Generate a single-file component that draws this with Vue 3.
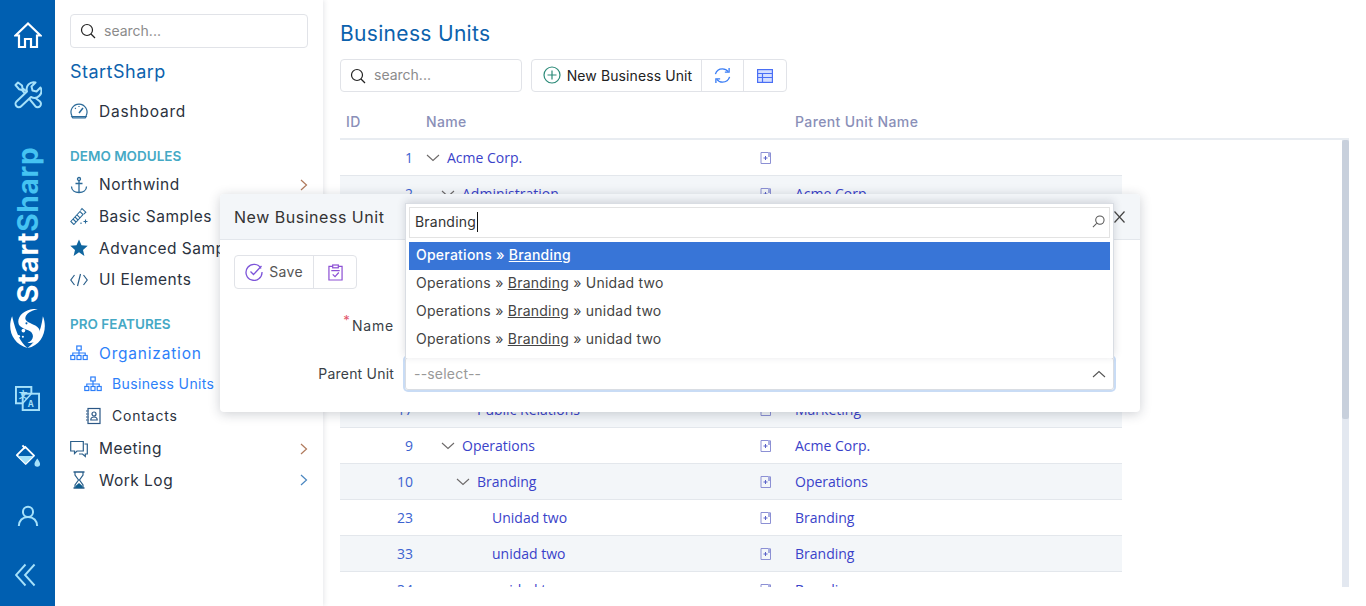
<template>
  <div class="page">
    <aside class="rail">
      <svg class="rail-icon home" viewBox="0 0 28 28" fill="none" stroke="#fff" stroke-width="2.2" stroke-linejoin="miter">
        <path d="M1.500 14.500 14 2.500l12.500 12H23V26h-6v-8h-6v8H5V14.500z" />
      </svg>
      <svg class="rail-icon tools" viewBox="0 0 28 28" fill="none" stroke="#a5e1fa" stroke-width="2" stroke-linejoin="round">
        <path d="M1.500 4 4 1.500l4 3 .5 2.800L26 20.500a3.300 3.300 0 0 1-4.700 4.700L8 9l-3-.8z" />
        <path d="M26.500 6.500 22.500 10.500 18.500 9.500 17.500 5.500 21.500 1.500a7 7 0 0 0-8.500 9L2.500 20.500a3.300 3.300 0 0 0 4.700 4.700L17 16a7 7 0 0 0 9.500-9.500z" fill="#005fb1" />
      </svg>
      <div class="rail-brand"><span class="brand-a">Start</span><span class="brand-b">Sharp</span></div>
      <svg class="rail-logo" viewBox="0 0 36 38" fill="#fff">
        <path d="M3 7C-2 19 3 34 18 38 11 32 7 24 3 7z" />
        <path d="M33 7c5 12 0 28-15 31 8-6 13-15 15-31z" />
        <path d="M28 0C18-1 9 5 9 12.500c0 7 10 7 13 10.500 3 4 .5 8.500-4 10 8 1.500 13-5 12-11.500-1-7-12-6.500-14-11.500C15 5.500 21 1.500 28 0z" />
        <g fill="#005fb1"><circle cx="19" cy="10" r="1.200" /><circle cx="22" cy="13" r="1" /><circle cx="17" cy="14" r="1" /></g>
        <circle cx="14" cy="21" r="1.800" /><circle cx="9.500" cy="26.500" r="1.200" /><circle cx="13.500" cy="27" r="1" />
      </svg>
      <svg class="rail-icon translate" viewBox="0 0 26 26" fill="none" stroke="#a5e1fa" stroke-width="2">
        <rect x="1" y="1" width="16" height="17" fill="#005fb1" />
        <rect x="8" y="8" width="17" height="17" fill="#005fb1" />
        <path d="M17 8 8 18" stroke-width="1.500" />
        <text x="4" y="12" class="glyph">文</text>
        <text x="13.500" y="22" class="glyph">A</text>
      </svg>
      <svg class="rail-icon bucket" viewBox="0 0 28 28" fill="none" stroke="#fff" stroke-width="2" stroke-linejoin="round">
        <path d="M2 12 11 3l9.500 9.500-9 9z" />
        <path d="M3 13h16.500l-8 8z" fill="#a5e1fa" stroke="none" />
        <path d="M8 1.500 11 5" />
        <path d="M24 15.500c-2 3-3 4.500-3 6a3 3 0 0 0 6 0c0-1.500-1-3-3-6z" fill="#a5e1fa" stroke="none" />
      </svg>
      <svg class="rail-icon user" viewBox="0 0 24 24" fill="none" stroke="#a5e1fa" stroke-width="2.200">
        <circle cx="12" cy="7.500" r="5.500" />
        <path d="M2 23c0-6 4-10 10-10s10 4 10 10" />
      </svg>
      <svg class="rail-icon collapse" viewBox="0 0 22 24" fill="none" stroke="#a5e1fa" stroke-width="2">
        <path d="M11 1 1 12l10 11" /><path d="M20.500 1 10.500 12l10 11" />
      </svg>
    </aside>

    <nav class="side">
      <div class="search side-search">
        <svg class="search-ico" viewBox="0 0 16 16" fill="none" stroke="#222" stroke-width="1.200"><circle cx="7" cy="7" r="5.500" /><path d="m11 11 4 4" /></svg>
        <span>search...</span>
      </div>
      <div class="side-brand">StartSharp</div>
      <div class="nav-row dash">
        <svg class="nav-ico" viewBox="0 0 18 18" fill="none" stroke="#2b6a99" stroke-width="1.200">
          <path d="M2 14a8 8 0 1 1 14 0" /><path d="M1.800 14.500h14.400l-1 1.500H2.800z" fill="#8eb4cf" /><path d="m9 11 4-5" stroke-width="1.500" /><path d="M5 6l.8.8M9 4v1" />
        </svg>
        <span class="wide">Dashboard</span>
      </div>

      <div class="section demo">DEMO MODULES</div>
      <div class="nav-row">
        <svg class="nav-ico" viewBox="0 0 18 18" fill="none" stroke="#2b6a99" stroke-width="1.300">
          <circle cx="9" cy="3" r="1.500" /><path d="M9 4.500V16.500M5.500 7.500h7M1.500 10.500c0 4 3.500 6 7.500 6s7.500-2 7.500-6" />
        </svg>
        <span>Northwind</span>
        <svg class="chev" viewBox="0 0 8 12" fill="none" stroke="#b07a5c" stroke-width="1.200"><path d="m1 1 5.500 5L1 11" /></svg>
      </div>
      <div class="nav-row">
        <svg class="nav-ico" viewBox="0 0 18 18" fill="none" stroke="#2b6a99" stroke-width="1.100">
          <path d="m.8 14.500 9.200-10 3 3-9.200 10z" /><path d="m3 12 3 3M5 10l3 3M7 7.800l3 3" /><path d="M10.500 3.500 12 1.500l3.800 3.700-2 2" /><path d="M15.500 12.500v4M13.500 14.500h4M11 15.500v1.500" />
        </svg>
        <span>Basic Samples</span>
      </div>
      <div class="nav-row">
        <svg class="nav-ico" viewBox="0 0 18 18" fill="#0f659f"><path d="m9 .5 2.500 5.800 6.200.5-4.700 4.100 1.400 6.100L9 13.300l-5.400 3.700L5 10.900.3 6.800l6.200-.5z" /></svg>
        <span>Advanced Samples</span>
      </div>
      <div class="nav-row">
        <svg class="nav-ico" viewBox="0 0 18 18" fill="none" stroke="#2b5f8a" stroke-width="1.200"><path d="M4.500 4 .8 9l3.700 5M13.500 4l3.700 5-3.700 5M10.500 3 7.500 15" /></svg>
        <span>UI Elements</span>
      </div>

      <div class="section pro">PRO FEATURES</div>
      <div class="nav-row active">
        <svg class="nav-ico" viewBox="0 0 18 18" fill="none" stroke="#2d7ff9" stroke-width="1.200">
          <rect x="6.800" y="2" width="4.400" height="4" /><rect x=".8" y="11.500" width="4" height="4" /><rect x="7" y="11.500" width="4" height="4" /><rect x="13.200" y="11.500" width="4" height="4" /><path d="M9 6v5.500M2.800 11.500V9h12.400v2.500" />
        </svg>
        <span class="wide">Organization</span>
      </div>
      <div class="nav-row sub active">
        <svg class="nav-ico" viewBox="0 0 18 18" fill="none" stroke="#2d7ff9" stroke-width="1.200">
          <rect x="6.800" y="2" width="4.400" height="4" /><rect x=".8" y="11.500" width="4" height="4" /><rect x="7" y="11.500" width="4" height="4" /><rect x="13.200" y="11.500" width="4" height="4" /><path d="M9 6v5.500M2.800 11.500V9h12.400v2.500" />
        </svg>
        <span>Business Units</span>
      </div>
      <div class="nav-row sub contacts">
        <svg class="nav-ico" viewBox="0 0 18 18" fill="none" stroke="#2b5785" stroke-width="1.200">
          <rect x="4" y="1.500" width="12" height="15" /><circle cx="10" cy="7" r="2" /><path d="M6.800 13c0-2 1.400-3 3.200-3s3.200 1 3.200 3z" /><path d="M2 4h3M2 7h3M2 10h3M2 13h3" stroke-dasharray="1.500 1" />
        </svg>
        <span class="wide">Contacts</span>
      </div>
      <div class="nav-row meeting">
        <svg class="nav-ico" viewBox="0 0 18 18" fill="none" stroke="#2b5f8a" stroke-width="1.200">
          <path d="M.7 1.500h12.600v9.500H7l-2.500 2.500V11H.7z" /><path d="M14.500 4h2.800v10h-2v2.500L12.500 14H9" />
        </svg>
        <span>Meeting</span>
        <svg class="chev" viewBox="0 0 8 12" fill="none" stroke="#b07a5c" stroke-width="1.200"><path d="m1 1 5.500 5L1 11" /></svg>
      </div>
      <div class="nav-row">
        <svg class="nav-ico" viewBox="0 0 18 18" fill="none" stroke="#2b5f8a" stroke-width="1.200">
          <path d="M3.500 1h11M3.500 17h11" stroke-width="1.600" /><path d="M5 1v3l3.500 5L5 14v3M13 1v3L9.500 9l3.500 5v3" /><path d="M5.500 17v-2l3.500-3 3.500 3v2z" fill="#0f5d8e" stroke="none" />
        </svg>
        <span>Work Log</span>
        <svg class="chev" viewBox="0 0 8 12" fill="none" stroke="#4a86c0" stroke-width="1.200"><path d="m1 1 5.500 5L1 11" /></svg>
      </div>
    </nav>

    <main class="content">
      <h1 class="title">Business Units</h1>
      <div class="toolbar">
        <div class="search grid-search">
          <svg class="search-ico" viewBox="0 0 16 16" fill="none" stroke="#222" stroke-width="1.200"><circle cx="7" cy="7" r="5.500" /><path d="m11 11 4 4" /></svg>
          <span>search...</span>
        </div>
        <div class="btn-group">
          <div class="btn add">
            <svg viewBox="0 0 18 18" width="18" height="18" fill="none" stroke="#2b8a78" stroke-width="1.200"><circle cx="9" cy="9" r="8" /><path d="M9 4.500v9M4.500 9h9" /></svg>
            <span>New Business Unit</span>
          </div>
          <div class="btn icon-btn">
            <svg viewBox="0 0 18 18" width="17" height="17" fill="none" stroke="#3a7df5" stroke-width="1.400">
              <path d="M1.500 7.500C2.500 4 5.500 2 9 2c2.500 0 4.500 1 6 3" /><path d="M16 1v4.500h-4.500" /><path d="M16.500 10.500C15.500 14 12.500 16 9 16c-2.500 0-4.500-1-6-3" /><path d="M2 17v-4.500h4.500" />
            </svg>
          </div>
          <div class="btn icon-btn">
            <svg viewBox="0 0 16 14" width="16" height="14" fill="#d6e0ff" stroke="#4a6ff5" stroke-width="1.200"><rect x=".6" y=".6" width="14.800" height="12.800" /><path d="M.6 4.500h14.800M.6 8.500h14.800M5.500 4.500v9" fill="none" /></svg>
          </div>
        </div>
      </div>

      <div class="grid-head">
        <div class="col-id head-id">ID</div>
        <div class="col-name head-name">Name</div>
        <div class="col-act"></div>
        <div class="col-parent">Parent Unit Name</div>
      </div>
      <div class="grid-view">
        <div class="rows">
          <div v-for="(row, i) in rows" :key="i" class="row">
            <template v-if="row.id">
              <div class="col-id num">{{ row.id }}</div>
              <div class="col-name link" :style="{ paddingLeft: 6 + row.level * 15 + 'px' }">
                <svg v-if="row.open" class="toggle" viewBox="0 0 14 8" fill="none" stroke="#6d6a6a" stroke-width="1.100"><path d="m1 1 6 5.500L13 1" /></svg>
                <span v-else class="toggle"></span>
                <span>{{ row.name }}</span>
              </div>
              <div class="col-act">
                <svg viewBox="0 0 12 14" width="12" height="14" fill="none" stroke="#5a62c8" stroke-width="1"><path d="M8 1.500H1v11h9.500V1.500" stroke="#8c90d4" /><path d="M9 1v5M5.500 5v4M3.500 7h4" /></svg>
              </div>
              <div class="col-parent link">{{ row.parent }}</div>
            </template>
          </div>
        </div>
        <div class="track"><div class="thumb"></div></div>
      </div>
    </main>

    <section class="modal">
      <header class="modal-head">
        <span>New Business Unit</span>
        <svg class="close" viewBox="0 0 11 12" fill="none" stroke="#444" stroke-width="1.200"><path d="m.5.5 10 11M10.500.5l-10 11" /></svg>
      </header>
      <div class="modal-body">
        <div class="btn-group save-group">
          <div class="btn save">
            <svg viewBox="0 0 18 18" width="18" height="18" fill="none" stroke="#7d55d9" stroke-width="1.300"><path d="M16 5.500A8 8 0 1 0 17 9" /><path d="m5.500 8.500 3 3L16.500 3" /></svg>
            <span>Save</span>
          </div>
          <div class="btn clip">
            <svg viewBox="0 0 16 18" width="15" height="17" fill="none" stroke="#8d50d4" stroke-width="1.300"><path d="M5 2.500H1V17h14V2.500h-4" /><rect x="5" y="1" width="6" height="3" /><path d="M3.500 7h9" /><path d="m5 11 2.500 2.500L11.500 9" /></svg>
          </div>
        </div>
        <div class="form">
          <label class="label"><sup class="req">*</sup><span class="wide">Name</span></label>
          <div class="field"></div>
          <label class="label">Parent Unit</label>
          <div class="field open">
            <span class="placeholder">--select--</span>
            <svg class="up" viewBox="0 0 14 8" fill="none" stroke="#555" stroke-width="1.100"><path d="m1 7 6-5.500L13 7" /></svg>
            <div class="drop">
              <div class="drop-search">
                <span>Branding</span><i class="caret"></i>
                <svg class="lens" viewBox="0 0 14 14" fill="none" stroke="#555" stroke-width="1.100"><circle cx="8.500" cy="5.500" r="4.500" /><path d="M5 9 1 13" /></svg>
              </div>
              <div v-for="(opt, i) in options" :key="i" class="opt" :class="{ hl: i === 0 }">Operations » <u>Branding</u>{{ opt }}</div>
            </div>
          </div>
        </div>
      </div>
    </section>
  </div>
</template>

<script setup>
// rows with no id sit completely behind the dialog, they only keep the striping
const rows = [
  { id: 1, name: 'Acme Corp.', level: 0, open: true, parent: '' },
  { id: 2, name: 'Administration', level: 1, open: true, parent: 'Acme Corp.' },
  {},
  {},
  {},
  {},
  {},
  { id: 17, name: 'Public Relations', level: 2, parent: 'Marketing' },
  { id: 9, name: 'Operations', level: 1, open: true, parent: 'Acme Corp.' },
  { id: 10, name: 'Branding', level: 2, open: true, parent: 'Operations' },
  { id: 23, name: 'Unidad two', level: 3, parent: 'Branding' },
  { id: 33, name: 'unidad two', level: 3, parent: 'Branding' },
  { id: 34, name: 'unidad two', level: 3, parent: 'Branding' }
]

const options = ['', ' » Unidad two', ' » unidad two', ' » unidad two']
</script>

<style>
body {
  margin: 0;
  background: #fff;
}
</style>

<style scoped>
.page {
  position: relative;
  display: flex;
  width: 1366px;
  height: 606px;
  overflow: hidden;
  background: #fff;
  font-family: Inter, "Liberation Sans", sans-serif;
  color: #2b3240;
}

/* left rail */
.rail {
  flex: none;
  display: flex;
  flex-direction: column;
  align-items: center;
  width: 55px;
  background: #005fb1;
}
.rail-icon {
  display: block;
  flex: none;
}
.home {
  width: 28px;
  height: 28px;
  margin-top: 21px;
}
.tools {
  width: 28px;
  height: 28px;
  margin-top: 32px;
}
.rail-brand {
  margin-top: 38px;
  height: 156px;
  writing-mode: vertical-rl;
  transform: rotate(180deg);
  font-size: 28px;
  font-weight: 700;
  line-height: 30px;
  letter-spacing: 0.8px;
  white-space: nowrap;
}
.brand-a {
  color: #fff;
}
.brand-b {
  color: #45c3f2;
}
.rail-logo {
  width: 37px;
  height: 39px;
  margin-top: 6px;
  flex: none;
}
.translate {
  width: 25px;
  height: 25px;
  margin-top: 38px;
}
.glyph {
  font-size: 9px;
  font-weight: 700;
  fill: #a5e1fa;
  stroke: none;
  font-family: "Noto Sans CJK SC", "Liberation Sans", sans-serif;
}
.bucket {
  width: 26px;
  height: 26px;
  margin-top: 33px;
}
.user {
  width: 22px;
  height: 24px;
  margin-top: 34px;
}
.collapse {
  width: 21px;
  height: 24px;
  margin-top: 35px;
  margin-right: 4px;
}

/* sidebar */
.side {
  flex: none;
  box-sizing: border-box;
  width: 268px;
  padding: 14px 15px 0;
  box-shadow: 1px 0 5px rgba(40, 50, 70, 0.12);
  font-size: 15.5px;
  letter-spacing: 0.48px;
}
.wide {
  letter-spacing: 0.8px;
}
.search {
  display: flex;
  align-items: center;
  box-sizing: border-box;
  padding-bottom: 2px;
  border: 1px solid #e1e3e8;
  border-radius: 4px;
  background: #fff;
  color: #8b8b8b;
  font-size: 14px;
  letter-spacing: 0;
}
.search-ico {
  width: 16px;
  height: 16px;
  flex: none;
  margin: 2px 8px 0 9px;
}
.side-search {
  height: 34px;
}
.grid-search {
  width: 182px;
  height: 33px;
}
.grid-search .search-ico {
  margin: 2px 8px 0 9px;
}
.side-brand {
  height: 24px;
  margin-top: 12px;
  color: #0c62ad;
  font-size: 18px;
  line-height: 24px;
}
.nav-row {
  display: flex;
  align-items: center;
  box-sizing: border-box;
  height: 31.6px;
  padding-top: 1px;
  white-space: nowrap;
}
.dash {
  margin-top: 11px;
}
.nav-ico {
  flex: none;
  width: 18px;
  height: 18px;
  margin-right: 11px;
}
.chev {
  width: 8px;
  height: 12px;
  margin-left: auto;
  margin-right: 0;
}
.section {
  height: 20px;
  font-size: 13.5px;
  font-weight: 600;
  line-height: 20px;
  letter-spacing: 0;
  color: #45a9c5;
}
.demo {
  margin-top: 19px;
  margin-bottom: 3px;
}
.pro {
  margin-top: 19px;
  margin-bottom: 3px;
}
.active {
  color: #2d7ff9;
}
.sub {
  height: 31px;
  margin-top: -1px;
  padding-left: 14px;
  font-size: 14px;
  letter-spacing: 0.36px;
}
.sub .nav-ico {
  margin-right: 10px;
}
.contacts {
  margin-top: 1px;
}
.meeting {
  margin-top: 2px;
}

/* main */
.content {
  flex: 1;
  min-width: 0;
  padding: 19px 17px 0;
}
.title {
  margin: 0;
  height: 30px;
  color: #0c62ad;
  font-size: 21px;
  font-weight: 400;
  line-height: 30px;
  letter-spacing: 0.32px;
}
.toolbar {
  display: flex;
  gap: 9px;
  margin-top: 10px;
}
.btn-group {
  display: flex;
  height: 33px;
  box-sizing: border-box;
  border: 1px solid #e1e3e8;
  border-radius: 4px;
}
.btn {
  display: flex;
  align-items: center;
  justify-content: center;
  box-sizing: border-box;
  height: 100%;
  font-size: 14px;
  letter-spacing: 0.1px;
  color: #222;
}
.btn + .btn {
  border-left: 1px solid #e1e3e8;
}
.add {
  width: 169px;
  padding-left: 2px;
  padding-bottom: 1px;
  gap: 6px;
}
.icon-btn {
  width: 42px;
}
.icon-btn:last-child {
  width: 43px;
}

/* grid */
.grid-head {
  display: flex;
  align-items: center;
  box-sizing: border-box;
  height: 35px;
  margin-top: 13px;
  border-bottom: 2px solid #e8ecf1;
  color: #8a8fb8;
  font-size: 14px;
  font-weight: 500;
  letter-spacing: 0.38px;
}
.col-id {
  flex: none;
  box-sizing: border-box;
  width: 80px;
}
.head-id {
  padding-left: 6px;
}
.col-name {
  flex: none;
  box-sizing: border-box;
  width: 335px;
}
.head-name {
  padding-left: 6px;
}
.col-act {
  flex: none;
  display: flex;
  justify-content: center;
  width: 22px;
}
.col-parent {
  flex: 1;
  padding-left: 18px;
}
.grid-view {
  display: flex;
  justify-content: space-between;
  height: 447px;
  overflow: hidden;
  font-family: "Open Sans", "Liberation Sans", sans-serif;
  font-size: 14px;
}
.rows {
  width: 782px;
}
.row {
  display: flex;
  align-items: center;
  box-sizing: border-box;
  height: 36px;
  border-bottom: 1px solid #e3e7ec;
}
.row:nth-child(even) {
  background: #f3f6f9;
}
.num {
  padding-right: 7px;
  text-align: right;
  color: #3c62d0;
}
.link {
  color: #3a42c9;
}
.row .col-name {
  display: flex;
  align-items: center;
}
.toggle {
  flex: none;
  width: 14px;
  height: 8px;
  margin-right: 7px;
}
.track {
  flex: none;
  width: 7px;
  height: 448px;
  background: #e3e8f0;
}
.thumb {
  height: 279px;
  background: #c8d0dc;
  border-radius: 2px;
}

/* dialog */
.modal {
  position: absolute;
  left: 220px;
  top: 194px;
  box-sizing: border-box;
  width: 920px;
  height: 218px;
  background: #fff;
  border-radius: 4px;
  box-shadow: 0 2px 12px rgba(30, 40, 60, 0.22);
  font-size: 14px;
  letter-spacing: 0.2px;
  color: #3a3f47;
}
.modal-head {
  display: flex;
  align-items: center;
  justify-content: space-between;
  box-sizing: border-box;
  height: 46px;
  padding: 0 15px 0 14px;
  background: #f3f6f9;
  border-bottom: 1px solid #e3e7ec;
  border-radius: 4px 4px 0 0;
  font-size: 16px;
  letter-spacing: 0.52px;
  color: #333;
}
.close {
  position: relative;
  z-index: 2;
  width: 11px;
  height: 12px;
}
.modal-body {
  padding: 15px 24px 0 14px;
}
.save-group {
  width: 123px;
  height: 34px;
}
.save {
  width: 79px;
  gap: 6px;
  padding-bottom: 1px;
  letter-spacing: 0.4px;
  color: #555;
}
.clip {
  width: 43px;
}
.form {
  display: grid;
  grid-template-columns: 160px 1fr;
  column-gap: 11px;
  row-gap: 15px;
  align-items: center;
  margin-top: 20px;
}
.label {
  text-align: right;
  white-space: nowrap;
}
.req {
  color: #e2556b;
  font-size: 13px;
  line-height: 0;
  margin-right: 2px;
}
.field {
  position: relative;
  box-sizing: border-box;
  height: 33px;
  margin-right: 2px;
  border: 1px solid #d9dde3;
  border-radius: 3px;
}
.open {
  display: flex;
  align-items: center;
  justify-content: space-between;
  padding: 0 7px 0 8px;
  box-shadow: 0 0 0 2px #c9dcf5;
}
.placeholder {
  color: #999;
}
.up {
  width: 14px;
  height: 8px;
}
.drop {
  position: absolute;
  left: -1px;
  right: -1px;
  bottom: 100%;
  box-sizing: border-box;
  padding: 3px 3px 4px;
  background: #fff;
  border: 1px solid #d9dde3;
  border-bottom: none;
  box-shadow: 0 -2px 8px rgba(30, 40, 60, 0.16);
  color: #444;
}
.drop-search {
  display: flex;
  align-items: center;
  position: relative;
  box-sizing: border-box;
  height: 31px;
  margin-bottom: 4px;
  padding: 0 0 2px 5px;
  border: 1px solid #e3e3e3;
  color: #333;
}
.caret {
  display: block;
  width: 1px;
  height: 20px;
  margin-left: 1px;
  background: #111;
}
.lens {
  position: absolute;
  right: 4px;
  top: 7px;
  width: 13px;
  height: 13px;
}
.opt {
  height: 28px;
  padding-left: 7px;
  line-height: 26px;
  letter-spacing: 0.24px;
  white-space: pre;
}
.hl {
  background: #3875d7;
  color: #fff;
  font-weight: 500;
}
</style>
